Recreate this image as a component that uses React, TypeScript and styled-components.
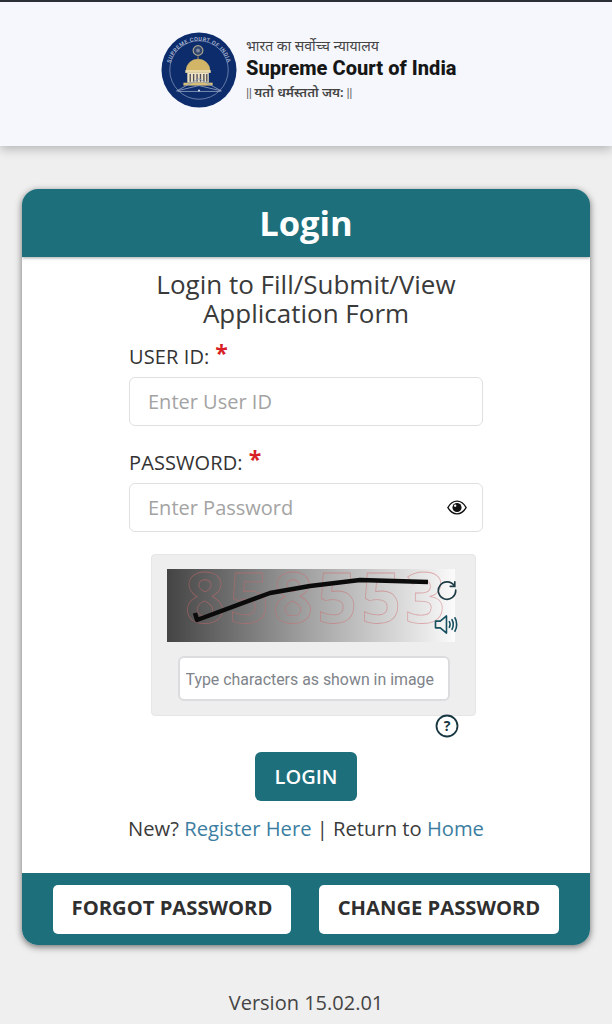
import React from "react";
import styled, { createGlobalStyle } from "styled-components";

const Global = createGlobalStyle`
  html, body { margin: 0; padding: 0; background: #efefef; }
  body { font-family: "Open Sans", "Noto Sans", sans-serif; color: #333; }
  * { box-sizing: border-box; }
  input { font-family: inherit; }
`;

const Page = styled.div`
  width: 612px;
  height: 1024px;
  overflow: hidden;
  display: flex;
  flex-direction: column;
  background: #efefef;
`;

const TopHeader = styled.header`
  height: 146px;
  flex: none;
  border-top: 2px solid #2b2f36;
  background: #f5f7fc;
  box-shadow: 0 3px 10px rgba(0, 0, 0, 0.25);
  display: flex;
  align-items: center;
  padding: 0 0 9px 161px;
  gap: 9px;
`;

const Brand = styled.div`
  display: flex;
  flex-direction: column;
  color: #222;
`;

const BrandHindi = styled.div`
  font-family: "Noto Sans", "Noto Sans Devanagari", "Lohit Devanagari", sans-serif;
  font-size: 14px;
  line-height: 20px;
  color: #444;
`;

const BrandName = styled.div`
  font-family: Roboto, sans-serif;
  font-weight: 800;
  font-size: 20px;
  line-height: 25px;
  color: #161616;
  letter-spacing: 0.05px;
`;

const BrandMotto = styled(BrandHindi)`
  font-size: 13px;
  font-weight: 600;
  line-height: 23px;
  display: flex;
  gap: 3px;
`;

const MottoBars = styled.span`
  font-family: Roboto, sans-serif;
  font-weight: 400;
  letter-spacing: -0.5px;
  color: #666;
`;

const Card = styled.main`
  margin: 43px 22px 0;
  width: 568px;
  height: 756px;
  flex: none;
  border-radius: 16px;
  background: #fff;
  overflow: hidden;
  box-shadow: 0 2px 7px rgba(0, 0, 0, 0.55);
  display: flex;
  flex-direction: column;
`;

const CardTitle = styled.h1`
  margin: 0;
  height: 68px;
  flex: none;
  background: #1d6f7c;
  color: #fff;
  font-size: 34.5px;
  font-weight: 700;
  line-height: 68px;
  text-align: center;
  box-shadow: 0 1px 3px rgba(0, 0, 0, 0.35);
`;

const CardBody = styled.div`
  flex: 1;
  display: flex;
  flex-direction: column;
  align-items: center;
  padding-top: 13px;
`;

const Subtitle = styled.h2`
  margin: 0;
  font-size: 26px;
  font-weight: 400;
  line-height: 29px;
  text-align: center;
  color: #3a3a3a;
`;

const Form = styled.div`
  width: 354px;
  margin-top: 15px;
  display: flex;
  flex-direction: column;
`;

const Label = styled.label`
  display: block;
  font-size: 20px;
  font-weight: 500;
  line-height: 28px;
  letter-spacing: 0.1px;
  color: #333;
  height: 34px;
`;

const Star = styled.span`
  color: #d81f26;
  font-size: 23px;
  font-weight: 700;
  margin-left: 6px;
  line-height: 20px;
  position: relative;
  top: -2px;
`;

const FieldBox = styled.div<{ $mb?: number }>`
  height: 49px;
  border: 1.5px solid #e0e0e0;
  border-radius: 6px;
  background: #fff;
  display: flex;
  align-items: center;
  padding: 0 15px 0 18px;
  margin-bottom: ${(p) => p.$mb ?? 0}px;
`;

const FieldInput = styled.input`
  flex: 1;
  min-width: 0;
  border: 0;
  outline: 0;
  padding: 0;
  font-size: 20px;
  background: transparent;
  &::placeholder { color: #a3a3a3; opacity: 1; }
`;

const CaptchaPanel = styled.section`
  width: 325px;
  height: 162px;
  margin: 22px 0 0 14px;
  background: #eeeeee;
  border: 1px solid #e6e6e6;
  border-radius: 4px;
  padding: 14px 15px 0;
  display: flex;
  flex-direction: column;
`;

const CaptchaRow = styled.div`
  position: relative;
  width: 288px;
  height: 73px;
`;

const CaptchaImage = styled.svg`
  display: block;
`;

const CaptchaTool = styled.svg<{ $top: number }>`
  position: absolute;
  right: -3px;
  top: ${(p) => p.$top}px;
`;

const CaptchaBox = styled.div`
  width: 272px;
  height: 45px;
  margin: 14px 0 0 11px;
  border: 2px solid #dcdcdf;
  border-radius: 6px;
  background: #fff;
  display: flex;
  align-items: center;
  padding: 1px 6px 0;
`;

const CaptchaInput = styled.input`
  width: 100%;
  border: 0;
  outline: 0;
  padding: 0;
  font-family: Roboto, sans-serif;
  font-size: 15.9px;
  background: transparent;
  &::placeholder { color: #80848a; opacity: 1; }
`;

const HelpRow = styled.div`
  width: 325px;
  height: 22px;
  margin-left: 14px;
  display: flex;
  justify-content: flex-end;
  padding-right: 17px;
`;

const HelpIcon = styled.svg`
  display: block;
  margin-top: -2px;
`;

const LoginButton = styled.button`
  margin-top: 14px;
  width: 102px;
  height: 49px;
  border: 0;
  border-radius: 6px;
  background: #1d6f7c;
  color: #fff;
  font-family: inherit;
  font-size: 20px;
  font-weight: 600;
`;

const LinksLine = styled.p`
  margin: 12px 0 0;
  font-size: 20.2px;
  line-height: 30px;
  color: #3b3b3b;
`;

const TextLink = styled.a`
  color: #3c7ea1;
  text-decoration: none;
`;

const CardFooter = styled.footer`
  height: 72px;
  flex: none;
  background: #1d6f7c;
  display: flex;
  justify-content: space-between;
  align-items: flex-start;
  padding: 12px 31px 0;
`;

const GhostButton = styled.button<{ $w: number }>`
  width: ${(p) => p.$w}px;
  height: 49px;
  border: 0;
  border-radius: 5px;
  background: #fff;
  color: #2f2f2f;
  font-family: inherit;
  font-size: 20.2px;
  font-weight: 700;
  line-height: 45px;
  padding: 0 0 4px;
`;

const Version = styled.div`
  margin-top: 44px;
  text-align: center;
  font-size: 20px;
  line-height: 27px;
  color: #444;
`;

const Seal = () => (
  <svg width="76" height="76" viewBox="0 0 78 78" aria-hidden="true">
    <defs>
      <path id="sealTop" d="M9 39a30 30 0 0 1 60 0" />
    </defs>
    <circle cx="39" cy="39" r="38.500" fill="#0d2c6c" />
    <circle cx="39" cy="39" r="30" fill="none" stroke="#7f93b8" strokeWidth="0.8" />
    <text fontFamily="Roboto, sans-serif" fontSize="5.6" fontWeight="600" fill="#aab6cf" letterSpacing="0.5">
      <textPath href="#sealTop" startOffset="50%" textAnchor="middle">SUPREME COURT OF INDIA</textPath>
    </text>
    <circle cx="38" cy="19" r="5" fill="#31456f" stroke="#a9a58d" strokeWidth="1.2" />
    <circle cx="38" cy="19" r="2" fill="#7f8aa0" />
    <path d="M38 25v3M26 39a12 11 0 0 1 24 0z" fill="#d3b568" stroke="#d3b568" strokeWidth="0.8" />
    <rect x="25" y="39" width="26" height="3" fill="#e7d9a8" />
    <path d="M27 42h22v10H27z" fill="#eee3c0" />
    <path d="M30 43v8M33.500 43v8M37 43v8M40.500 43v8M44 43v8M47 43v8" stroke="#51505a" strokeWidth="1.4" />
    <path d="M23 52h30v3H23z" fill="#d7bd75" />
    <path d="M39 55L16 60.500 39 48 62 60.500z" fill="none" stroke="#8d9dbd" strokeWidth="0.9" />
    <path d="M17 61h44" stroke="#8d9dbd" strokeWidth="0.9" />
    <circle cx="39" cy="60" r="1" fill="#dfe5ef" />
  </svg>
);

const Captcha = () => (
  <CaptchaImage width="288" height="73" viewBox="0 0 288 73" aria-label="captcha">
    <defs>
      <linearGradient id="capGrad" x1="0" x2="1" y1="0" y2="0">
        <stop offset="0" stopColor="#444444" />
        <stop offset="0.5" stopColor="#a4a4a4" />
        <stop offset="0.92" stopColor="#ececec" />
        <stop offset="1" stopColor="#fbfbfb" />
      </linearGradient>
    </defs>
    <rect width="288" height="73" fill="url(#capGrad)" />
    <text
      x="18"
      y="54"
      fontFamily="Open Sans, sans-serif"
      fontWeight="700"
      fontSize="70"
      fill="none"
      stroke="#d06a6e"
      strokeWidth="0.8"
      letterSpacing="4"
      opacity="0.5"
    >
      858553
    </text>
    <path
      d="M28 44l2 7 73-27 40-7 50-6 68 2"
      fill="none"
      stroke="#0b0b0b"
      strokeWidth="4.5"
      strokeLinejoin="round"
    />
  </CaptchaImage>
);

export default function App() {
  return (
    <Page>
      <Global />
      <TopHeader>
        <Seal />
        <Brand>
          <BrandHindi>भारत का सर्वोच्च न्यायालय</BrandHindi>
          <BrandName>Supreme Court of India</BrandName>
          <BrandMotto>
            <MottoBars>||</MottoBars>
            <span>यतो धर्मस्ततो जय:</span>
            <MottoBars>||</MottoBars>
          </BrandMotto>
        </Brand>
      </TopHeader>
      <Card>
        <CardTitle>Login</CardTitle>
        <CardBody>
          <Subtitle>
            Login to Fill/Submit/View
            <br />
            Application Form
          </Subtitle>
          <Form>
            <Label>USER ID:<Star>*</Star></Label>
            <FieldBox $mb={23}>
              <FieldInput placeholder="Enter User ID" />
            </FieldBox>
            <Label>PASSWORD:<Star>*</Star></Label>
            <FieldBox>
              <FieldInput placeholder="Enter Password" />
              <svg width="20" height="15" viewBox="0 0 22 16" aria-hidden="true">
                <path d="M1 8c2.500-4.500 6-7 10-7s7.500 2.500 10 7c-2.500 4.500-6 7-10 7S3.500 12.500 1 8z" fill="none" stroke="#111" strokeWidth="1.6" />
                <circle cx="11" cy="8" r="5" fill="#111" />
                <circle cx="9" cy="6" r="1.300" fill="#fff" />
              </svg>
            </FieldBox>
          </Form>
          <CaptchaPanel>
            <CaptchaRow>
              <Captcha />
              <CaptchaTool $top={10} width="22" height="22" viewBox="0 0 24 24" fill="none" stroke="#1e3c46" strokeWidth="1.8" strokeLinecap="round" aria-hidden="true">
                <path d="M20 7.500A9.500 9.500 0 1 0 21.500 12" />
                <path d="M20.500 3v5h-5" />
              </CaptchaTool>
              <CaptchaTool $top={45} width="24" height="21" viewBox="0 0 25 22" fill="none" stroke="#17505f" strokeWidth="1.7" strokeLinejoin="round" strokeLinecap="round" aria-hidden="true">
                <path d="M1.500 7.500h5L13 2v18l-6.500-5.500h-5z" />
                <path d="M16 8c1 1.500 1 4.500 0 6M18.800 6c1.700 2.700 1.700 7.300 0 10M21.800 4c2.500 3.800 2.500 10.200 0 14" />
              </CaptchaTool>
            </CaptchaRow>
            <CaptchaBox>
              <CaptchaInput placeholder="Type characters as shown in image" />
            </CaptchaBox>
          </CaptchaPanel>
          <HelpRow>
            <HelpIcon width="24" height="24" viewBox="0 0 24 24" aria-hidden="true">
              <circle cx="12" cy="12" r="10.500" fill="none" stroke="#17363f" strokeWidth="1.800" />
              <text x="12" y="17" textAnchor="middle" fontFamily="Open Sans, sans-serif" fontWeight="700" fontSize="14" fill="#17363f">?</text>
            </HelpIcon>
          </HelpRow>
          <LoginButton>LOGIN</LoginButton>
          <LinksLine>
            New? <TextLink href="#">Register Here</TextLink> | Return to <TextLink href="#">Home</TextLink>
          </LinksLine>
        </CardBody>
        <CardFooter>
          <GhostButton $w={238}>FORGOT PASSWORD</GhostButton>
          <GhostButton $w={240}>CHANGE PASSWORD</GhostButton>
        </CardFooter>
      </Card>
      <Version>Version 15.02.01</Version>
    </Page>
  );
}
